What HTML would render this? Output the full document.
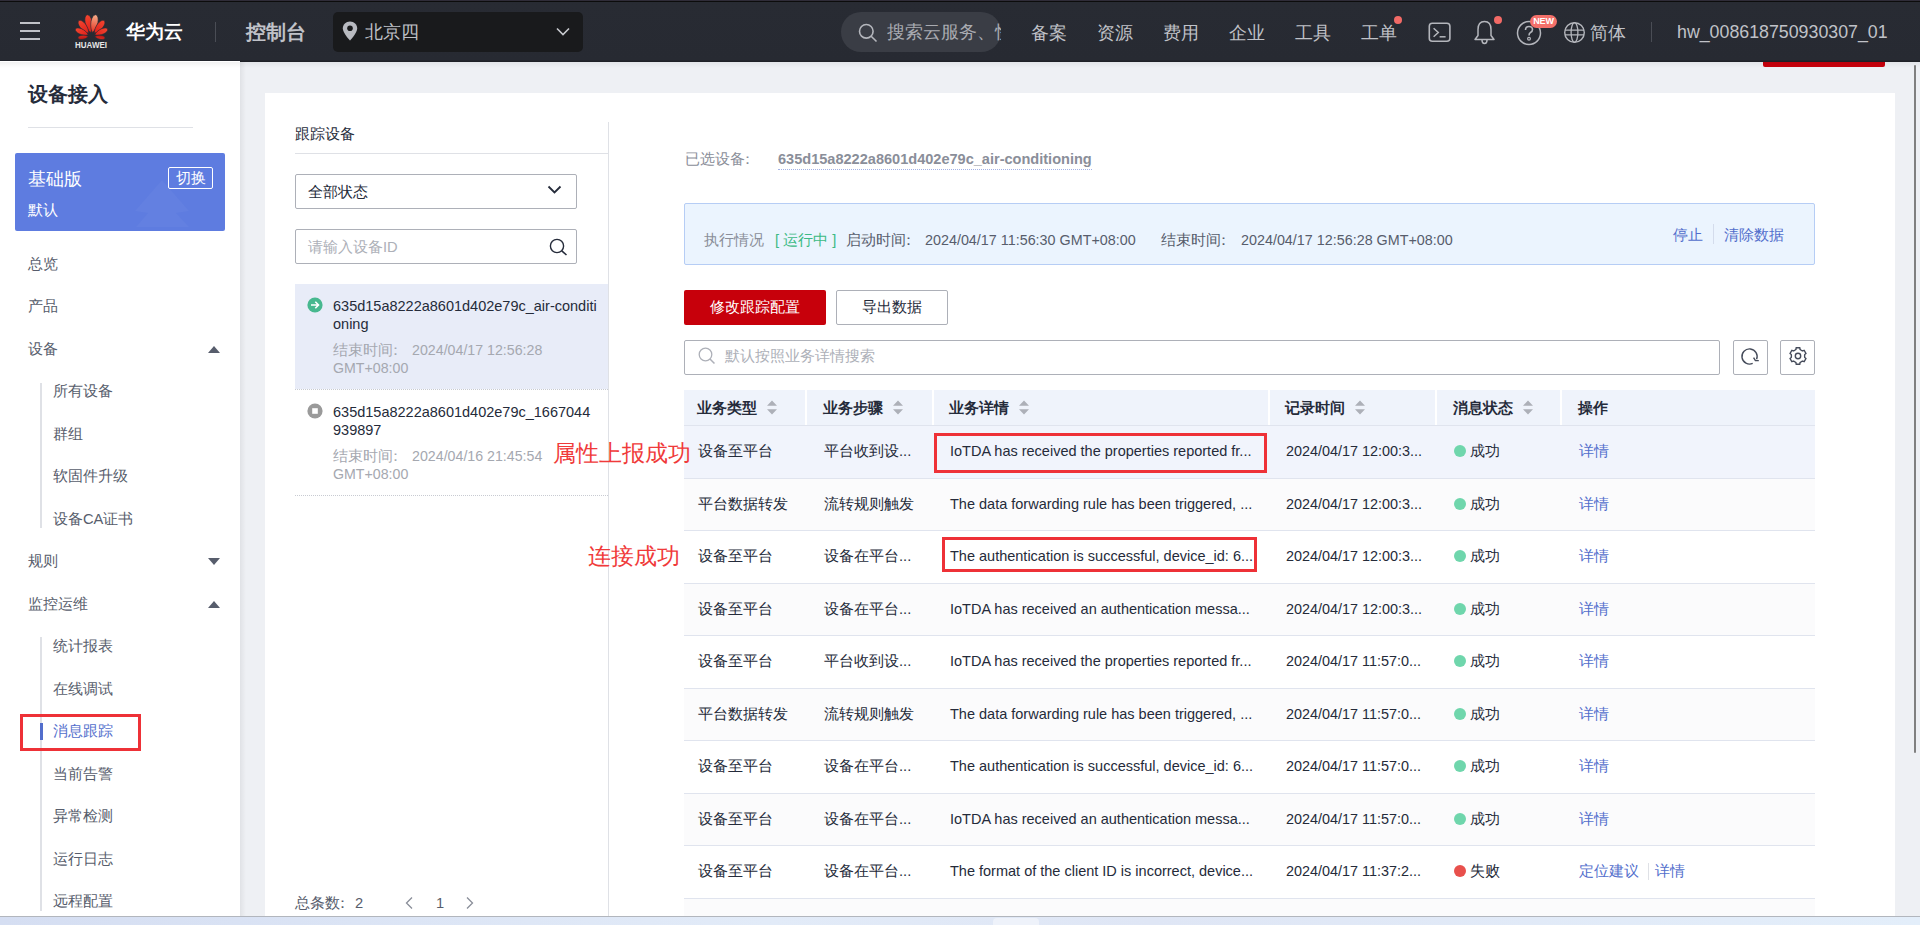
<!DOCTYPE html>
<html><head><meta charset="utf-8">
<style>
*{box-sizing:border-box;margin:0;padding:0}
html,body{width:1920px;height:925px;overflow:hidden;background:#eef0f4;font-family:"Liberation Sans",sans-serif;font-size:14.7px;color:#252b3a}
.a{position:absolute;white-space:nowrap}
#hdr{position:absolute;left:0;top:0;width:1920px;height:62px;background:linear-gradient(#2f2c38 0,#2f2c38 1px,#0c0c0c 1px,#0c0c0c 2px,#282b33 2px,#272a32 60px,#1e2026 61px);}
.ht{position:absolute;color:#c0c2c8;font-size:18px;line-height:20px;top:23px}
#side{position:absolute;left:0;top:61px;width:240px;height:864px;background:#fff}
.nv{position:absolute;left:28px;color:#575d6c;font-size:14.7px;line-height:20px}
.sn{position:absolute;left:53px;color:#575d6c;font-size:14.7px;line-height:20px}
.tri{position:absolute;left:208px;width:0;height:0;border-left:6px solid transparent;border-right:6px solid transparent}
.up{border-bottom:7px solid #575d6c}
.dn{border-top:7px solid #575d6c}
#card{position:absolute;left:265px;top:93px;width:1630px;height:832px;background:#fff}
.th{position:absolute;top:390px;height:36px;background:#eff3fb}
.tht{position:absolute;top:398px;font-weight:bold;font-size:14.7px;line-height:20px;color:#252b3a}
.sort{position:absolute;top:400px;width:10px;height:15px}
.row{position:absolute;left:684px;width:1131px;border-bottom:1px solid #dfe1e6}
.td{position:absolute;font-size:14.7px;line-height:20px;color:#252b3a}
.dot{position:absolute;width:12px;height:12px;border-radius:50%}
.lnk{position:absolute;font-size:14.7px;line-height:20px;color:#526ecc}
.redbox{position:absolute;border:3px solid #ee3137}
.cl{position:relative;left:-5px}
.anno{position:absolute;color:#f03a3a;font-size:23px;line-height:26px}
</style></head><body>

<div class="a" style="left:1763px;top:55px;width:122px;height:12px;background:#c7000b;border-radius:2px"></div>
<div id="hdr"></div>
<!-- hamburger -->
<div class="a" style="left:20px;top:22px;width:20px;height:2px;background:#c0c2c8"></div>
<div class="a" style="left:20px;top:30px;width:20px;height:2px;background:#c0c2c8"></div>
<div class="a" style="left:20px;top:38px;width:20px;height:2px;background:#c0c2c8"></div>
<!-- logo -->
<svg class="a" style="left:70px;top:10px" width="42" height="42" viewBox="0 0 42 42">
<defs><linearGradient id="g1" x1="0" y1="1" x2="0" y2="0"><stop offset="0" stop-color="#e01f1a"/><stop offset="1" stop-color="#f2452f"/></linearGradient>
<linearGradient id="g2" x1="0" y1="1" x2="0" y2="0"><stop offset="0" stop-color="#e8301f"/><stop offset="1" stop-color="#f6b08c"/></linearGradient>
<linearGradient id="g3" x1="0" y1="0" x2="1" y2="0"><stop offset="0" stop-color="#b51614"/><stop offset="1" stop-color="#e02a20"/></linearGradient></defs>
<path transform="translate(20.6 22.5) rotate(-11)" d="M0 0 C4.62 -5.46 4.62 -17.29 0 -18.20 C-4.62 -17.29 -4.62 -5.46 0 0Z" fill="url(#g1)" stroke="#282b33" stroke-width="0.6"/><path transform="translate(22.4 22.5) rotate(11)" d="M0 0 C4.62 -5.46 4.62 -17.29 0 -18.20 C-4.62 -17.29 -4.62 -5.46 0 0Z" fill="url(#g2)" stroke="#282b33" stroke-width="0.6"/><path transform="translate(18.7 23.3) rotate(-38)" d="M0 0 C4.18 -4.86 4.18 -15.39 0 -16.20 C-4.18 -15.39 -4.18 -4.86 0 0Z" fill="url(#g1)" stroke="#282b33" stroke-width="0.6"/><path transform="translate(24.3 23.3) rotate(38)" d="M0 0 C4.18 -4.86 4.18 -15.39 0 -16.20 C-4.18 -15.39 -4.18 -4.86 0 0Z" fill="url(#g1)" stroke="#282b33" stroke-width="0.6"/><path transform="translate(18.3 24.8) rotate(-66)" d="M0 0 C3.74 -4.26 3.74 -13.49 0 -14.20 C-3.74 -13.49 -3.74 -4.26 0 0Z" fill="url(#g1)" stroke="#282b33" stroke-width="0.6"/><path transform="translate(24.7 24.8) rotate(66)" d="M0 0 C3.74 -4.26 3.74 -13.49 0 -14.20 C-3.74 -13.49 -3.74 -4.26 0 0Z" fill="url(#g1)" stroke="#282b33" stroke-width="0.6"/><path transform="translate(18.3 26.6) rotate(-97)" d="M0 0 C2.75 -3.15 2.75 -9.97 0 -10.50 C-2.75 -9.97 -2.75 -3.15 0 0Z" fill="url(#g3)" stroke="#282b33" stroke-width="0.6"/><path transform="translate(24.7 26.6) rotate(97)" d="M0 0 C2.75 -3.15 2.75 -9.97 0 -10.50 C-2.75 -9.97 -2.75 -3.15 0 0Z" fill="url(#g3)" stroke="#282b33" stroke-width="0.6"/>
<text x="21" y="38.3" text-anchor="middle" font-family="Liberation Sans" font-weight="bold" font-size="8.6" textLength="32" lengthAdjust="spacingAndGlyphs" fill="#e6e6e6">HUAWEI</text>
</svg>
<div class="a" style="left:126px;top:19px;color:#fff;font-size:18.5px;line-height:26px;font-weight:bold">华为云</div>
<div class="a" style="left:215px;top:22px;width:1px;height:20px;background:#4a4d55"></div>
<div class="a" style="left:246px;top:19px;color:#c0c2c8;font-size:19.5px;line-height:26px;font-weight:bold">控制台</div>
<!-- region -->
<div class="a" style="left:333px;top:12px;width:250px;height:40px;background:#191a1c;border-radius:5px"></div>
<svg class="a" style="left:342px;top:21px" width="16" height="20" viewBox="0 0 16 20"><path d="M8 0.5C3.9 0.5 0.8 3.6 0.8 7.5 0.8 12 8 19.5 8 19.5S15.2 12 15.2 7.5C15.2 3.6 12.1 0.5 8 0.5Z" fill="#b8bac0"/><circle cx="8" cy="7.3" r="2.8" fill="#191a1c"/></svg>
<div class="ht" style="left:365px;top:22px">北京四</div>
<svg class="a" style="left:556px;top:27px" width="14" height="9" viewBox="0 0 14 9"><path d="M1 1.5 L7 7.5 L13 1.5" stroke="#c8cacf" stroke-width="1.6" fill="none"/></svg>
<!-- search pill -->
<div class="a" style="left:841px;top:12px;width:160px;height:40px;background:#3a3d45;border-radius:20px;overflow:hidden"></div>
<svg class="a" style="left:858px;top:23px" width="20" height="20" viewBox="0 0 20 20"><circle cx="8.3" cy="8.3" r="6.8" stroke="#b4b6bc" stroke-width="1.6" fill="none"/><path d="M13.2 13.2 L18.5 18.5" stroke="#b4b6bc" stroke-width="1.6"/></svg>
<div class="a" style="left:887px;top:22px;width:114px;overflow:hidden;color:#a9abb1;font-size:18px;line-height:20px">搜索云服务、快捷</div>
<div class="ht" style="left:1031px">备案</div>
<div class="ht" style="left:1097px">资源</div>
<div class="ht" style="left:1163px">费用</div>
<div class="ht" style="left:1229px">企业</div>
<div class="ht" style="left:1295px">工具</div>
<div class="ht" style="left:1361px">工单</div>
<div class="a" style="left:1394px;top:16px;width:8px;height:8px;border-radius:50%;background:#f26a66"></div>
<!-- terminal -->
<svg class="a" style="left:1428px;top:22px" width="24" height="21" viewBox="0 0 24 21"><rect x="1.3" y="1.3" width="20.6" height="18" rx="3" stroke="#b4b6bc" stroke-width="1.6" fill="none"/><path d="M5.6 6.2 L10.3 10.5 L5.6 14.8" stroke="#b4b6bc" stroke-width="1.5" fill="none"/><path d="M11.6 14.8 L17.6 14.8" stroke="#b4b6bc" stroke-width="1.5"/></svg>
<!-- bell -->
<svg class="a" style="left:1473px;top:20px" width="24" height="25" viewBox="0 0 24 25"><path d="M11.5 1.5 C6.5 1.5 5 5.5 5 9.5 L5 15.5 L2 19.5 L21 19.5 L18 15.5 L18 9.5 C18 5.5 16.5 1.5 11.5 1.5Z" stroke="#b4b6bc" stroke-width="1.5" fill="none" stroke-linejoin="round"/><path d="M9 20 Q9 23.5 11.5 23.5 Q14 23.5 14 20" stroke="#b4b6bc" stroke-width="1.5" fill="none"/></svg>
<div class="a" style="left:1494px;top:16px;width:8px;height:8px;border-radius:50%;background:#f26a66"></div>
<!-- help -->
<svg class="a" style="left:1516px;top:20px" width="26" height="26" viewBox="0 0 26 26"><circle cx="13" cy="13" r="11.5" stroke="#b4b6bc" stroke-width="1.5" fill="none"/><path d="M9.5 10 Q9.5 6.5 13 6.5 Q16.5 6.5 16.5 9.5 Q16.5 11.5 14.5 12.5 Q13 13.3 13 15.5" stroke="#b4b6bc" stroke-width="1.6" fill="none"/><circle cx="13" cy="18.8" r="1.4" stroke="#b4b6bc" stroke-width="1.2" fill="none"/></svg>
<div class="a" style="left:1530px;top:15px;width:27px;height:13px;border-radius:7px;background:#f4706a;color:#fff;font-size:9px;line-height:13px;text-align:center;letter-spacing:-0.2px;font-weight:bold">NEW</div>
<!-- globe -->
<svg class="a" style="left:1563px;top:21px" width="23" height="23" viewBox="0 0 23 23"><circle cx="11.5" cy="11.5" r="9.8" stroke="#b4b6bc" stroke-width="1.4" fill="none"/><ellipse cx="11.5" cy="11.5" rx="3.4" ry="9.8" stroke="#b4b6bc" stroke-width="1.3" fill="none"/><path d="M1.8 9.2 H21.2 M1.8 13.8 H21.2" stroke="#b4b6bc" stroke-width="1.3"/></svg>
<div class="ht" style="left:1590px">简体</div>
<div class="a" style="left:1651px;top:22px;width:1px;height:20px;background:#4a4d55"></div>
<div class="a" style="left:1677px;top:20px;color:#c0c2c8;font-size:17.8px;line-height:24px">hw_008618750930307_01</div>

<!-- red button cut under header -->

<!-- sidebar -->
<div id="side"></div>
<div class="a" style="left:28px;top:81px;font-size:19.5px;line-height:26px;font-weight:bold;color:#252b3a">设备接入</div>
<div class="a" style="left:28px;top:127px;width:165px;height:1px;background:#dfe1e6"></div>
<div class="a" style="left:15px;top:153px;width:210px;height:78px;background:#5e7ce0;border-radius:2px;overflow:hidden">
  <div style="position:absolute;left:0;top:0;width:210px;height:78px;background:rgba(255,255,255,0.03);clip-path:polygon(147px 27px,174px 58px,161px 60px,174px 74px,121px 74px,133px 60px,120px 58px)"></div>
</div>
<div class="a" style="left:28px;top:167px;color:#fff;font-size:18px;line-height:24px">基础版</div>
<div class="a" style="left:28px;top:200px;color:#fff;font-size:14.7px;line-height:20px">默认</div>
<div class="a" style="left:168px;top:167px;width:45px;height:22px;border:1px solid #fff;border-radius:2px;color:#fff;font-size:14.7px;line-height:20px;text-align:center">切换</div>

<div class="nv" style="top:254px">总览</div>
<div class="nv" style="top:296px">产品</div>
<div class="nv" style="top:339px">设备</div><div class="tri up" style="top:346px"></div>
<div class="a" style="left:40px;top:383px;width:2px;height:145px;background:#dfe1e6"></div>
<div class="sn" style="top:381px">所有设备</div>
<div class="sn" style="top:424px">群组</div>
<div class="sn" style="top:466px">软固件升级</div>
<div class="sn" style="top:509px">设备CA证书</div>
<div class="nv" style="top:551px">规则</div><div class="tri dn" style="top:558px"></div>
<div class="nv" style="top:594px">监控运维</div><div class="tri up" style="top:601px"></div>
<div class="a" style="left:40px;top:637px;width:2px;height:274px;background:#dfe1e6"></div>
<div class="sn" style="top:636px">统计报表</div>
<div class="sn" style="top:679px">在线调试</div>
<div class="a" style="left:40px;top:723px;width:3px;height:17px;background:#526ecc"></div>
<div class="sn" style="top:721px;color:#526ecc">消息跟踪</div>
<div class="sn" style="top:764px">当前告警</div>
<div class="sn" style="top:806px">异常检测</div>
<div class="sn" style="top:849px">运行日志</div>
<div class="sn" style="top:891px">远程配置</div>
<div class="redbox" style="left:20px;top:714px;width:121px;height:37px"></div>

<!-- card -->
<div id="card"></div>
<div class="a" style="left:240px;top:62px;width:6px;height:854px;background:linear-gradient(90deg,rgba(0,0,0,0.06),rgba(0,0,0,0))"></div>

<!-- left panel -->
<div class="a" style="left:295px;top:124px;font-size:14.7px;line-height:20px;color:#252b3a">跟踪设备</div>
<div class="a" style="left:295px;top:153px;width:313px;height:1px;background:#dfe1e6"></div>
<div class="a" style="left:608px;top:122px;width:1px;height:803px;background:#dfe1e6"></div>
<div class="a" style="left:295px;top:174px;width:282px;height:35px;border:1px solid #adb0b8;border-radius:2px"></div>
<div class="a" style="left:308px;top:182px;font-size:14.7px;line-height:20px;color:#252b3a">全部状态</div>
<svg class="a" style="left:547px;top:185px" width="15" height="10" viewBox="0 0 15 10"><path d="M1.5 1.5 L7.5 7.5 L13.5 1.5" stroke="#252b3a" stroke-width="1.8" fill="none"/></svg>
<div class="a" style="left:295px;top:229px;width:282px;height:35px;border:1px solid #adb0b8;border-radius:2px"></div>
<div class="a" style="left:308px;top:237px;font-size:14.7px;line-height:20px;color:#adb0b8">请输入设备ID</div>
<svg class="a" style="left:549px;top:238px" width="19" height="18" viewBox="0 0 19 18"><circle cx="8" cy="8" r="6.6" stroke="#252b3a" stroke-width="1.4" fill="none"/><path d="M12.8 12.8 L17.5 17" stroke="#252b3a" stroke-width="1.6"/></svg>

<div class="a" style="left:295px;top:284px;width:313px;height:105px;background:#e8ecf8"></div>
<div class="a" style="left:295px;top:389px;width:313px;height:0;border-top:1px dotted #c8cbd2"></div>
<div class="a" style="left:295px;top:495px;width:313px;height:0;border-top:1px dotted #c8cbd2"></div>
<svg class="a" style="left:307px;top:297px" width="16" height="16" viewBox="0 0 16 16"><circle cx="8" cy="8" r="7.6" fill="#47b88f"/><path d="M4 8 H11.5 M8.3 4.8 L11.5 8 L8.3 11.2" stroke="#fff" stroke-width="1.6" fill="none"/></svg>
<div class="a" style="left:333px;top:297px;font-size:14.5px;line-height:18px;color:#252b3a">635d15a8222a8601d402e79c_air-conditi<br>oning</div>
<div class="a" style="left:333px;top:341px;font-size:14.7px;line-height:18px;color:#a5a8b0">结束时间<span class="cl">：</span>&nbsp;<span style="font-size:14.2px">2024/04/17 12:56:28<br>GMT+08:00</span></div>
<svg class="a" style="left:307px;top:403px" width="16" height="16" viewBox="0 0 16 16"><circle cx="8" cy="8" r="7.6" fill="#9a9a9a"/><rect x="5.2" y="5.2" width="5.6" height="5.6" fill="#fff"/></svg>
<div class="a" style="left:333px;top:403px;font-size:14.5px;line-height:18px;color:#252b3a">635d15a8222a8601d402e79c_1667044<br>939897</div>
<div class="a" style="left:333px;top:447px;font-size:14.7px;line-height:18px;color:#a5a8b0">结束时间<span class="cl">：</span>&nbsp;<span style="font-size:14.2px">2024/04/16 21:45:54<br>GMT+08:00</span></div>

<div class="a" style="left:295px;top:893px;font-size:14.7px;line-height:20px;color:#575d6c">总条数<span class="cl">：</span>2</div>
<svg class="a" style="left:404px;top:896px" width="10" height="14" viewBox="0 0 10 14"><path d="M8 1.5 L2.5 7 L8 12.5" stroke="#8a8e99" stroke-width="1.3" fill="none"/></svg>
<div class="a" style="left:436px;top:893px;font-size:14.7px;line-height:20px;color:#575d6c">1</div>
<svg class="a" style="left:465px;top:896px" width="10" height="14" viewBox="0 0 10 14"><path d="M2 1.5 L7.5 7 L2 12.5" stroke="#8a8e99" stroke-width="1.3" fill="none"/></svg>

<!-- right -->
<div class="a" style="left:685px;top:149px;font-size:14.7px;line-height:20px;color:#8a8e99">已选设备<span class="cl">：</span></div>
<div class="a" style="left:778px;top:149px;font-size:14.55px;line-height:20px;color:#8a8e99;font-weight:bold;border-bottom:1px dotted #a3b2e6">635d15a8222a8601d402e79c_air-conditioning</div>

<div class="a" style="left:684px;top:203px;width:1131px;height:62px;background:#ebf4fe;border:1px solid #b6cdf5;border-radius:2px"></div>
<div class="a" style="left:704px;top:230px;font-size:14.7px;line-height:20px;color:#8a8e99">执行情况</div>
<div class="a" style="left:775px;top:230px;font-size:14.7px;line-height:20px;color:#3dba85">[ 运行中 ]</div>
<div class="a" style="left:846px;top:230px;font-size:14.7px;line-height:20px;color:#575d6c">启动时间<span class="cl">：</span></div>
<div class="a" style="left:925px;top:230px;font-size:14.35px;line-height:20px;color:#575d6c">2024/04/17 11:56:30 GMT+08:00</div>
<div class="a" style="left:1161px;top:230px;font-size:14.7px;line-height:20px;color:#575d6c">结束时间<span class="cl">：</span></div>
<div class="a" style="left:1241px;top:230px;font-size:14.35px;line-height:20px;color:#575d6c">2024/04/17 12:56:28 GMT+08:00</div>
<div class="lnk" style="left:1673px;top:225px">停止</div>
<div class="a" style="left:1713px;top:224px;width:1px;height:20px;background:#d4dcec"></div>
<div class="lnk" style="left:1724px;top:225px">清除数据</div>

<div class="a" style="left:684px;top:290px;width:142px;height:35px;background:#c7000b;border-radius:2px;color:#fff;font-size:14.7px;line-height:35px;text-align:center">修改跟踪配置</div>
<div class="a" style="left:836px;top:290px;width:112px;height:35px;border:1px solid #adb0b8;border-radius:2px;color:#252b3a;font-size:14.7px;line-height:33px;text-align:center">导出数据</div>

<div class="a" style="left:684px;top:340px;width:1036px;height:35px;border:1px solid #adb0b8;border-radius:2px"></div>
<svg class="a" style="left:698px;top:347px" width="18" height="18" viewBox="0 0 18 18"><circle cx="7.5" cy="7.5" r="6.3" stroke="#adb0b8" stroke-width="1.3" fill="none"/><path d="M12 12 L16.5 16.5" stroke="#adb0b8" stroke-width="1.5"/></svg>
<div class="a" style="left:725px;top:346px;font-size:14.7px;line-height:20px;color:#adb0b8">默认按照业务详情搜索</div>
<div class="a" style="left:1733px;top:340px;width:35px;height:35px;border:1px solid #adb0b8;border-radius:2px"></div>
<svg class="a" style="left:1735px;top:342px" width="30" height="30" viewBox="0 0 30 30"><path d="M17.7 21.4 A7.6 7.6 0 1 1 21.6 17.3" stroke="#454b5a" stroke-width="1.4" fill="none"/><path d="M18.6 15.6 L20.4 18.6 L23.8 18.6" stroke="#454b5a" stroke-width="1.4" fill="none"/></svg>
<div class="a" style="left:1780px;top:340px;width:35px;height:35px;border:1px solid #adb0b8;border-radius:2px"></div>
<svg class="a" style="left:1783px;top:341px" width="30" height="30" viewBox="0 0 30 30"><path d="M11.70 9.28 L12.98 8.40 L13.11 6.82 L16.89 6.82 L17.02 8.40 L18.30 9.28 L19.71 9.95 L21.14 9.27 L23.03 12.54 L21.72 13.45 L21.60 15.00 L21.72 16.55 L23.03 17.46 L21.14 20.73 L19.71 20.05 L18.30 20.72 L17.02 21.60 L16.89 23.18 L13.11 23.18 L12.98 21.60 L11.70 20.72 L10.29 20.05 L8.86 20.73 L6.97 17.46 L8.28 16.55 L8.40 15.00 L8.28 13.45 L6.97 12.54 L8.86 9.27 L10.29 9.95Z" stroke="#454b5a" stroke-width="1.4" fill="none" stroke-linejoin="round"/><circle cx="15" cy="15" r="2.7" stroke="#454b5a" stroke-width="1.4" fill="none"/></svg>

<!--TABLE-->
<div class="a" style="left:684px;top:390px;width:1131px;height:35px;background:#eff3fb"></div>
<div class="a" style="left:805px;top:390px;width:2px;height:35px;background:#fff"></div>
<div class="a" style="left:932px;top:390px;width:2px;height:35px;background:#fff"></div>
<div class="a" style="left:1268px;top:390px;width:2px;height:35px;background:#fff"></div>
<div class="a" style="left:1435px;top:390px;width:2px;height:35px;background:#fff"></div>
<div class="a" style="left:1560px;top:390px;width:2px;height:35px;background:#fff"></div>
<div class="tht" style="left:697px">业务类型</div>
<svg class="a" style="left:767px;top:400px" width="10" height="15" viewBox="0 0 10 15"><path d="M5 0.5 L10 5.8 H0Z M5 14.5 L10 9.2 H0Z" fill="#adb0b8"/></svg>
<div class="tht" style="left:823px">业务步骤</div>
<svg class="a" style="left:893px;top:400px" width="10" height="15" viewBox="0 0 10 15"><path d="M5 0.5 L10 5.8 H0Z M5 14.5 L10 9.2 H0Z" fill="#adb0b8"/></svg>
<div class="tht" style="left:949px">业务详情</div>
<svg class="a" style="left:1019px;top:400px" width="10" height="15" viewBox="0 0 10 15"><path d="M5 0.5 L10 5.8 H0Z M5 14.5 L10 9.2 H0Z" fill="#adb0b8"/></svg>
<div class="tht" style="left:1285px">记录时间</div>
<svg class="a" style="left:1355px;top:400px" width="10" height="15" viewBox="0 0 10 15"><path d="M5 0.5 L10 5.8 H0Z M5 14.5 L10 9.2 H0Z" fill="#adb0b8"/></svg>
<div class="tht" style="left:1453px">消息状态</div>
<svg class="a" style="left:1523px;top:400px" width="10" height="15" viewBox="0 0 10 15"><path d="M5 0.5 L10 5.8 H0Z M5 14.5 L10 9.2 H0Z" fill="#adb0b8"/></svg>
<div class="tht" style="left:1578px">操作</div>
<div class="a" style="left:684px;top:426px;width:1131px;height:52px;background:#f1f4fc"></div>
<div class="a" style="left:684px;top:479px;width:1131px;height:51px;background:#fbfbfc"></div>
<div class="a" style="left:684px;top:531px;width:1131px;height:52px;background:#fff"></div>
<div class="a" style="left:684px;top:584px;width:1131px;height:51px;background:#fbfbfc"></div>
<div class="a" style="left:684px;top:636px;width:1131px;height:52px;background:#fff"></div>
<div class="a" style="left:684px;top:689px;width:1131px;height:51px;background:#fbfbfc"></div>
<div class="a" style="left:684px;top:741px;width:1131px;height:52px;background:#fff"></div>
<div class="a" style="left:684px;top:794px;width:1131px;height:51px;background:#fbfbfc"></div>
<div class="a" style="left:684px;top:846px;width:1131px;height:52px;background:#fff"></div>
<div class="a" style="left:684px;top:425px;width:1131px;height:1px;background:#e0e4ee"></div>
<div class="a" style="left:684px;top:478px;width:1131px;height:1px;background:#e0e4ee"></div>
<div class="a" style="left:684px;top:530px;width:1131px;height:1px;background:#e0e4ee"></div>
<div class="a" style="left:684px;top:583px;width:1131px;height:1px;background:#e0e4ee"></div>
<div class="a" style="left:684px;top:635px;width:1131px;height:1px;background:#e0e4ee"></div>
<div class="a" style="left:684px;top:688px;width:1131px;height:1px;background:#e0e4ee"></div>
<div class="a" style="left:684px;top:740px;width:1131px;height:1px;background:#e0e4ee"></div>
<div class="a" style="left:684px;top:793px;width:1131px;height:1px;background:#e0e4ee"></div>
<div class="a" style="left:684px;top:845px;width:1131px;height:1px;background:#e0e4ee"></div>
<div class="a" style="left:684px;top:898px;width:1131px;height:1px;background:#e0e4ee"></div>
<div class="a" style="left:684px;top:899px;width:1131px;height:20px;background:#fbfbfc"></div>
<div class="td" style="left:698px;top:441px">设备至平台</div>
<div class="td" style="left:824px;top:441px">平台收到设...</div>
<div class="td" style="left:950px;top:441px;font-size:14.5px">IoTDA has received the properties reported fr...</div>
<div class="td" style="left:1286px;top:441px;font-size:14.4px">2024/04/17 12:00:3...</div>
<div class="dot" style="left:1454px;top:445px;background:#6fd6ac"></div>
<div class="td" style="left:1470px;top:441px">成功</div>
<div class="lnk" style="left:1579px;top:441px">详情</div>
<div class="td" style="left:698px;top:494px">平台数据转发</div>
<div class="td" style="left:824px;top:494px">流转规则触发</div>
<div class="td" style="left:950px;top:494px;font-size:14.5px">The data forwarding rule has been triggered, ...</div>
<div class="td" style="left:1286px;top:494px;font-size:14.4px">2024/04/17 12:00:3...</div>
<div class="dot" style="left:1454px;top:498px;background:#6fd6ac"></div>
<div class="td" style="left:1470px;top:494px">成功</div>
<div class="lnk" style="left:1579px;top:494px">详情</div>
<div class="td" style="left:698px;top:546px">设备至平台</div>
<div class="td" style="left:824px;top:546px">设备在平台...</div>
<div class="td" style="left:950px;top:546px;font-size:14.5px">The authentication is successful, device_id: 6...</div>
<div class="td" style="left:1286px;top:546px;font-size:14.4px">2024/04/17 12:00:3...</div>
<div class="dot" style="left:1454px;top:550px;background:#6fd6ac"></div>
<div class="td" style="left:1470px;top:546px">成功</div>
<div class="lnk" style="left:1579px;top:546px">详情</div>
<div class="td" style="left:698px;top:599px">设备至平台</div>
<div class="td" style="left:824px;top:599px">设备在平台...</div>
<div class="td" style="left:950px;top:599px;font-size:14.5px">IoTDA has received an authentication messa...</div>
<div class="td" style="left:1286px;top:599px;font-size:14.4px">2024/04/17 12:00:3...</div>
<div class="dot" style="left:1454px;top:603px;background:#6fd6ac"></div>
<div class="td" style="left:1470px;top:599px">成功</div>
<div class="lnk" style="left:1579px;top:599px">详情</div>
<div class="td" style="left:698px;top:651px">设备至平台</div>
<div class="td" style="left:824px;top:651px">平台收到设...</div>
<div class="td" style="left:950px;top:651px;font-size:14.5px">IoTDA has received the properties reported fr...</div>
<div class="td" style="left:1286px;top:651px;font-size:14.4px">2024/04/17 11:57:0...</div>
<div class="dot" style="left:1454px;top:655px;background:#6fd6ac"></div>
<div class="td" style="left:1470px;top:651px">成功</div>
<div class="lnk" style="left:1579px;top:651px">详情</div>
<div class="td" style="left:698px;top:704px">平台数据转发</div>
<div class="td" style="left:824px;top:704px">流转规则触发</div>
<div class="td" style="left:950px;top:704px;font-size:14.5px">The data forwarding rule has been triggered, ...</div>
<div class="td" style="left:1286px;top:704px;font-size:14.4px">2024/04/17 11:57:0...</div>
<div class="dot" style="left:1454px;top:708px;background:#6fd6ac"></div>
<div class="td" style="left:1470px;top:704px">成功</div>
<div class="lnk" style="left:1579px;top:704px">详情</div>
<div class="td" style="left:698px;top:756px">设备至平台</div>
<div class="td" style="left:824px;top:756px">设备在平台...</div>
<div class="td" style="left:950px;top:756px;font-size:14.5px">The authentication is successful, device_id: 6...</div>
<div class="td" style="left:1286px;top:756px;font-size:14.4px">2024/04/17 11:57:0...</div>
<div class="dot" style="left:1454px;top:760px;background:#6fd6ac"></div>
<div class="td" style="left:1470px;top:756px">成功</div>
<div class="lnk" style="left:1579px;top:756px">详情</div>
<div class="td" style="left:698px;top:809px">设备至平台</div>
<div class="td" style="left:824px;top:809px">设备在平台...</div>
<div class="td" style="left:950px;top:809px;font-size:14.5px">IoTDA has received an authentication messa...</div>
<div class="td" style="left:1286px;top:809px;font-size:14.4px">2024/04/17 11:57:0...</div>
<div class="dot" style="left:1454px;top:813px;background:#6fd6ac"></div>
<div class="td" style="left:1470px;top:809px">成功</div>
<div class="lnk" style="left:1579px;top:809px">详情</div>
<div class="td" style="left:698px;top:861px">设备至平台</div>
<div class="td" style="left:824px;top:861px">设备在平台...</div>
<div class="td" style="left:950px;top:861px;font-size:14.5px">The format of the client ID is incorrect, device...</div>
<div class="td" style="left:1286px;top:861px;font-size:14.4px">2024/04/17 11:37:2...</div>
<div class="dot" style="left:1454px;top:865px;background:#e8504c"></div>
<div class="td" style="left:1470px;top:861px">失败</div>
<div class="lnk" style="left:1579px;top:861px">定位建议</div>
<div class="a" style="left:1648px;top:863px;width:1px;height:17px;background:#dfe1e6"></div>
<div class="lnk" style="left:1655px;top:861px">详情</div>
<!--/TABLE-->
<div class="redbox" style="left:934px;top:433px;width:333px;height:40px"></div>
<div class="redbox" style="left:942px;top:537px;width:315px;height:35px"></div>
<div class="anno" style="left:553px;top:440px">属性上报成功</div>
<div class="anno" style="left:588px;top:543px">连接成功</div>
<div class="a" style="left:1914px;top:65px;width:2px;height:688px;background:#808080;border-radius:1px"></div>
<div class="a" style="left:0;top:916px;width:1920px;height:9px;background:linear-gradient(90deg,#d5def2,#e2ebf8 40%,#dfe6f5 60%,#e3eefa);border-top:1px solid #b2b6bd"></div>
<div class="a" style="left:993px;top:918px;width:46px;height:7px;background:#eef2fa;border-radius:4px 4px 0 0"></div>
<div class="a" style="left:0;top:62px;width:1920px;height:6px;background:linear-gradient(rgba(0,0,0,0.05),rgba(0,0,0,0));z-index:10"></div>
</body></html>
